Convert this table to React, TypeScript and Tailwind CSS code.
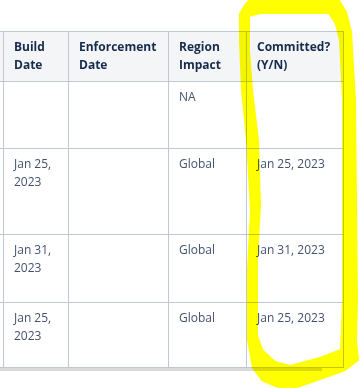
import React from 'react';

type Row = { height: string; build: string; region: string; committed: string };

const rows: Row[] = [
  { height: 'h-[67px]', build: '', region: 'NA', committed: '' },
  { height: 'h-[86px]', build: 'Jan 25, 2023', region: 'Global', committed: 'Jan 25, 2023' },
  { height: 'h-[68px]', build: 'Jan 31, 2023', region: 'Global', committed: 'Jan 31, 2023' },
  { height: 'h-[65px]', build: 'Jan 25, 2023', region: 'Global', committed: 'Jan 25, 2023' },
];

const cell = 'border-l border-[#c1c7d0] px-[10px] pt-[6px]';

// hand-drawn highlighter loop around the last column
const outer =
  'M240 14 L245 5 L252 -2 L300 -3 L338 -1 L346 12 L351 32 L355 100 L356 200 L357 300 L356 340 L358 360 L345 370 L320 379 L297 387 L278 387 L262 380 L253 368 L248 340 L248 270 L251 210 L247 140 L242 90 L240 40 Z';
const inner =
  'M249 16 L249 50 L252 90 L258 140 L260 205 L257 260 L257 335 L262 350 L275 362 L290 366 L320 358 L341 350 L343 300 L343 100 L340 40 L336 24 L329 13 L260 13 Z';

function HeaderRow() {
  return (
    <div className="flex h-[51px] border-y border-[#c1c7d0] bg-[#f4f5f7] font-bold text-[#172b4d]">
      <div className="w-[3px]" />
      <div className={`${cell} w-[65px]`}>Build Date</div>
      <div className={`${cell} w-[100px]`}>Enforcement Date</div>
      <div className={`${cell} w-[78px]`}>Region Impact</div>
      <div className={`${cell} w-[98px] border-r`}>Committed? (Y/N)</div>
    </div>
  );
}

export default function App() {
  return (
    <div
      className="relative h-[388px] w-[361px] overflow-hidden bg-white pt-[31px] text-[12px] leading-[18px]"
      style={{ fontFamily: '"Open Sans", "Noto Sans", sans-serif' }}
    >
      <div className="w-[344px]">
        <HeaderRow />
        {rows.map((row, i) => (
          <div key={i} className={`flex ${row.height} border-b border-[#c1c7d0] text-[#42526e]`}>
            <div className="w-[3px]" />
            <div className={`${cell} w-[65px]`}>{row.build}</div>
            <div className={`${cell} w-[100px]`} />
            <div className={`${cell} w-[78px]`}>{row.region}</div>
            <div className={`${cell} w-[98px] border-r`}>{row.committed}</div>
          </div>
        ))}
      </div>
      <div className="h-[3px] w-[322px] bg-[#dadada]" />

      <svg
        className="pointer-events-none absolute left-0 top-0 mix-blend-multiply"
        width="361"
        height="388"
        viewBox="0 0 361 388"
      >
        <path d={`${outer} ${inner}`} fill="#ffff00" fillRule="evenodd" stroke="#ffff00" strokeWidth="2" strokeLinejoin="round" />
      </svg>
    </div>
  );
}
